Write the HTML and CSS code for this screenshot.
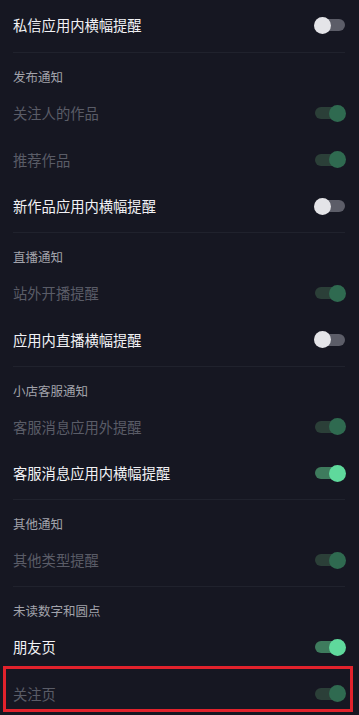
FILE: index.html
```html
<!DOCTYPE html>
<html lang="zh">
<head>
<meta charset="utf-8">
<link rel="stylesheet" href="styles.css">
</head>
<body>
<div class="page">
  <section class="group first">
    <div class="row"><span class="label">私信应用内横幅提醒</span><span class="switch off"></span></div>
  </section>
  <section class="group">
    <div class="head">发布通知</div>
    <div class="row"><span class="label dim">关注人的作品</span><span class="switch on disabled"></span></div>
    <div class="row"><span class="label dim">推荐作品</span><span class="switch on disabled"></span></div>
    <div class="row"><span class="label">新作品应用内横幅提醒</span><span class="switch off"></span></div>
  </section>
  <section class="group">
    <div class="head">直播通知</div>
    <div class="row"><span class="label dim">站外开播提醒</span><span class="switch on disabled"></span></div>
    <div class="row"><span class="label">应用内直播横幅提醒</span><span class="switch off"></span></div>
  </section>
  <section class="group">
    <div class="head">小店客服通知</div>
    <div class="row"><span class="label dim">客服消息应用外提醒</span><span class="switch on disabled"></span></div>
    <div class="row"><span class="label">客服消息应用内横幅提醒</span><span class="switch on"></span></div>
  </section>
  <section class="group">
    <div class="head">其他通知</div>
    <div class="row"><span class="label dim">其他类型提醒</span><span class="switch on disabled"></span></div>
  </section>
  <section class="group last">
    <div class="head">未读数字和圆点</div>
    <div class="row"><span class="label">朋友页</span><span class="switch on"></span></div>
    <div class="row marked"><span class="label dim">关注页</span><span class="switch on disabled"></span><span class="highlight"></span></div>
  </section>
</div>
</body>
</html>
```
FILE: styles.css
```css
html, body {
  margin: 0;
  padding: 0;
  background: #161722;
  height: 100%;
  overflow: hidden;
}
body {
  font-family: "Noto Sans CJK SC", "Noto Sans", sans-serif;
  color: #e9e9ed;
}
.page {
  padding-top: 2px;
}
.group {
  margin: 0 14px 0 13px;
  padding-bottom: 2.5px;
  border-bottom: 1px solid #20222d;
}
.group.first {
  padding-bottom: 3.5px;
}
.group.last {
  border-bottom: none;
}
.head {
  height: 37px;
  box-sizing: border-box;
  padding-top: 15px;
  font-size: 12.5px;
  line-height: 18px;
  color: #a2a3ab;
}
.row {
  position: relative;
  height: 46.5px;
  display: flex;
  align-items: center;
  justify-content: space-between;
}
.label {
  font-size: 14.3px;
  font-weight: 400;
  line-height: 20px;
  color: #f2f2f5;
}
.label.dim {
  color: #5a5c67;
}
.switch {
  position: relative;
  width: 30px;
  height: 12px;
  border-radius: 6px;
  flex: none;
}
.switch::after {
  content: "";
  position: absolute;
  top: -2.5px;
  width: 17px;
  height: 17px;
  border-radius: 50%;
}
.switch.off {
  background: #5c5d68;
}
.switch.off::after {
  left: -1px;
  background: #e4e4e8;
}
.switch.on {
  background: #3e7b5d;
}
.switch.on::after {
  right: -1px;
  background: #5fd99c;
}
.switch.on.disabled {
  background: #2b3f38;
}
.switch.on.disabled::after {
  background: #2f6a50;
}
.highlight {
  position: absolute;
  left: -10px;
  right: -8px;
  top: -4.5px;
  height: 46px;
  border: 3px solid #e2222c;
  box-sizing: border-box;
}
```
